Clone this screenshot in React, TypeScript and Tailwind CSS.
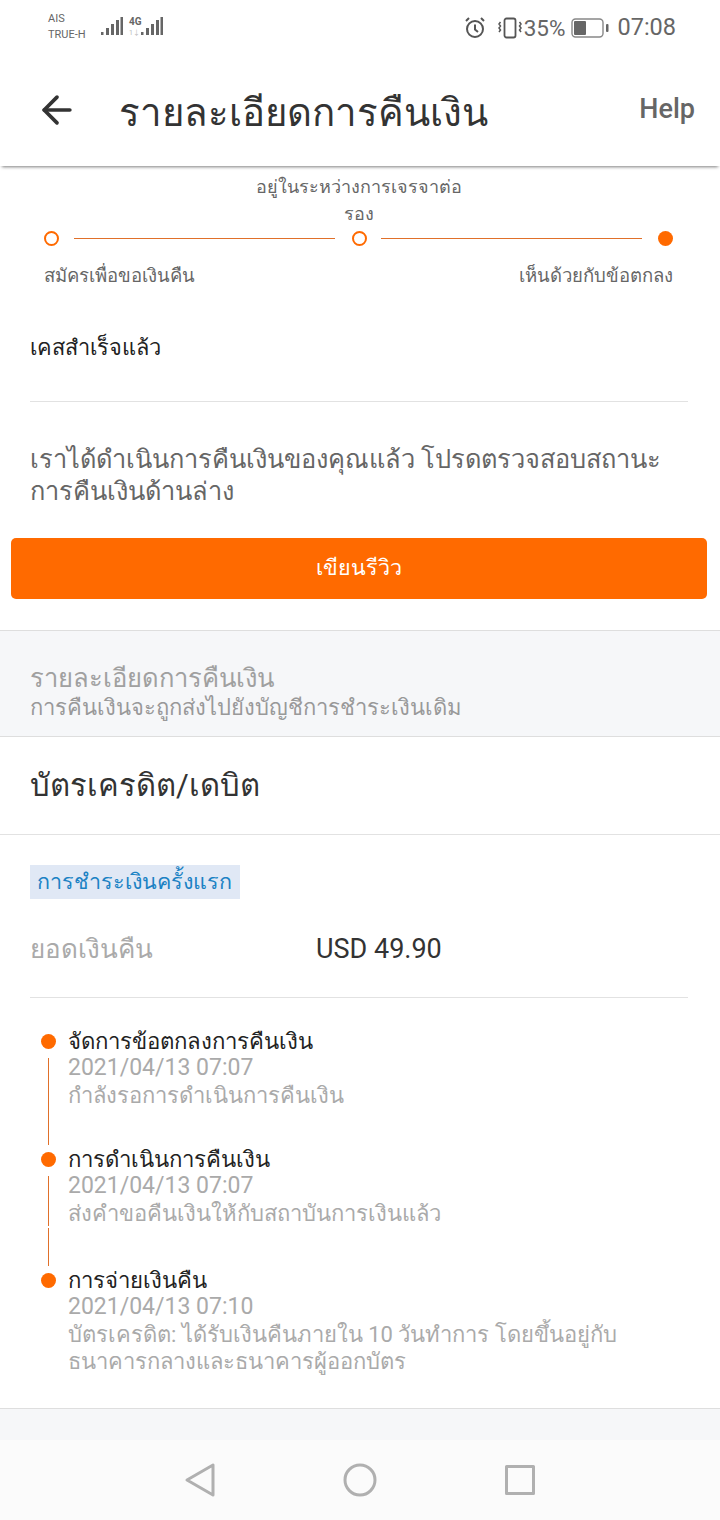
import { ArrowLeft } from 'lucide-react'

const FONT = "font-['Roboto','Noto_Sans','Noto_Sans_CJK_SC',sans-serif]"

function SignalBars() {
  return (
    <g fill="#666">
      <rect x="0" y="15" width="2.5" height="3" />
      <rect x="5" y="11" width="3" height="7" />
      <rect x="10" y="7" width="3" height="11" />
      <rect x="15" y="3" width="3" height="15" />
      <rect x="19.5" y="0" width="2.5" height="18" />
    </g>
  )
}

function StatusBar() {
  return (
    <div className="flex h-[56px] items-center justify-between pl-[48px] pr-[44px] text-[#666]">
      <div className="flex items-center">
        <div className="-mt-[2px] w-[53px] text-[11px] leading-[16px]">
          <div>AIS</div>
          <div>TRUE-H</div>
        </div>
        <svg width="64" height="24" viewBox="0 0 64 24" className="mt-[2px]">
          <SignalBars />
          <text x="28" y="8" fontSize="10" fontWeight="700" fill="#666">4G</text>
          <text x="28" y="18" fontSize="7" fill="#bbb">1↓</text>
          <g transform="translate(40 0)">
            <SignalBars />
          </g>
        </svg>
      </div>
      <div className="flex items-center text-[22.5px] leading-none">
        <svg width="24" height="24" viewBox="0 0 24 24" fill="none" stroke="#555" strokeWidth="2" className="mr-[11px]">
          <circle cx="12" cy="13" r="8" />
          <path d="M12 8.5V13.5L15 16M3 5l3-3M21 5l-3-3" />
        </svg>
        <svg width="24" height="24" viewBox="0 0 24 24" fill="none" stroke="#555" className="mr-[2px]">
          <rect x="6.5" y="2.5" width="11" height="19" rx="2" strokeWidth="1.8" />
          <path d="M2.5 6l-1.5 2 1.5 2-1.5 2 1.5 2-1.5 2M21.5 6l1.5 2-1.5 2 1.5 2-1.5 2 1.5 2" strokeWidth="1.5" />
        </svg>
        <span>35%</span>
        <svg width="38" height="20" viewBox="0 0 38 20" fill="none" className="ml-[6px] mr-[8px]">
          <rect x="1" y="1" width="31" height="18" rx="3.5" stroke="#888" strokeWidth="1.4" />
          <rect x="3" y="3" width="12" height="14" rx="1" fill="#666" />
          <rect x="35" y="6" width="2.5" height="8" rx="1" fill="#666" />
        </svg>
        <span className="text-[23.5px]">07:08</span>
      </div>
    </div>
  )
}

function Header() {
  return (
    <header className="relative z-10 flex h-[110px] items-center bg-white pl-[35px] pr-[25px] shadow-[0_3px_3px_-2px_rgba(0,0,0,0.5)]">
      <ArrowLeft size={44} strokeWidth={2} className="-mt-[2px] text-[#333]" />
      <h1 className="ml-[40px] mt-[4px] flex-1 text-[38.4px] leading-none text-[#333]">รายละเอียดการคืนเงิน</h1>
      <span className="-mt-[4px] text-[27px] font-medium text-[#666]">Help</span>
    </header>
  )
}

function Stepper() {
  return (
    <section className="pt-[7px]">
      <p className="mx-auto w-[230px] -translate-x-[1px] text-center text-[18px] leading-[27px] text-[#666]">
        อยู่ในระหว่างการเจรจาต่อรอง
      </p>
      <div className="flex h-[22px] items-center pl-[44px] pr-[47px]">
        <span className="h-[15px] w-[15px] rounded-full border-2 border-[#ff6a00]" />
        <span className="ml-[15px] mr-[17px] h-[1px] flex-1 bg-[#e0702a]" />
        <span className="h-[15px] w-[15px] rounded-full border-2 border-[#ff6a00]" />
        <span className="ml-[14px] mr-[16px] h-[1px] flex-1 bg-[#e0702a]" />
        <span className="h-[15px] w-[15px] rounded-full bg-[#ff6a00]" />
      </div>
      <div className="mt-[14px] flex justify-between pl-[44px] pr-[47px] text-[18.5px] leading-[27px] text-[#666]">
        <span>สมัครเพื่อขอเงินคืน</span>
        <span>เห็นด้วยกับข้อตกลง</span>
      </div>
    </section>
  )
}

const EVENTS = [
  {
    title: 'จัดการข้อตกลงการคืนเงิน',
    time: '2021/04/13 07:07',
    note: ['กำลังรอการดำเนินการคืนเงิน'],
  },
  {
    title: 'การดำเนินการคืนเงิน',
    time: '2021/04/13 07:07',
    note: ['ส่งคำขอคืนเงินให้กับสถาบันการเงินแล้ว'],
  },
  {
    title: 'การจ่ายเงินคืน',
    time: '2021/04/13 07:10',
    note: ['บัตรเครดิต: ได้รับเงินคืนภายใน 10 วันทำการ โดยขึ้นอยู่กับ', 'ธนาคารกลางและธนาคารผู้ออกบัตร'],
  },
]

function Timeline() {
  return (
    <section className="pl-[41px] pr-[30px] pt-[29px] pb-[33px]">
      {EVENTS.map((e, i) => (
        <div key={e.title} className={`flex ${i === 0 ? 'h-[118px]' : i === 1 ? 'h-[121px]' : ''}`}>
          <div className="flex w-[27px] flex-col items-start">
            <span className="mt-[7px] h-[15px] w-[15px] shrink-0 rounded-full bg-[#ff6a00]" />
            {i === 0 && <span className="ml-[7px] mt-[9px] w-[1px] flex-1 bg-[#e0702a]" />}
            {i === 1 && (
              <>
                <span className="ml-[7px] mt-[9px] h-[50px] w-[1px] bg-[#e0702a]" />
                <span className="ml-[7px] mt-[2px] w-[1px] flex-1 bg-[#e0702a]" />
              </>
            )}
          </div>
          <div>
            <div className="text-[22.2px] leading-[29px] text-[#222]">{e.title}</div>
            <div className="-mt-[2px] text-[23px] leading-[27px] text-[#aaa]">{e.time}</div>
            <div className="mt-[1px] text-[22px] leading-[27px] text-[#aaa]">
              {e.note.map((n) => (
                <div key={n}>{n}</div>
              ))}
            </div>
          </div>
        </div>
      ))}
    </section>
  )
}

function NavBar() {
  return (
    <nav className="flex h-[80px] items-center justify-center gap-[120px] bg-[#fbfbfb]">
      <svg width="40" height="40" viewBox="0 0 40 40" fill="none" stroke="#b0b0b0" strokeWidth="3" strokeLinejoin="round">
        <path d="M33 5v30L7 20z" />
      </svg>
      <svg width="40" height="40" viewBox="0 0 40 40" fill="none" stroke="#b0b0b0" strokeWidth="3">
        <circle cx="20" cy="20" r="15" />
      </svg>
      <svg width="40" height="40" viewBox="0 0 40 40" fill="none" stroke="#b0b0b0" strokeWidth="3" strokeLinejoin="round">
        <rect x="6.5" y="6.5" width="27" height="27" />
      </svg>
    </nav>
  )
}

export default function App() {
  return (
    <div className={`flex h-[1520px] w-[720px] flex-col overflow-hidden bg-white ${FONT}`}>
      <StatusBar />
      <Header />
      <Stepper />

      <div className="ml-[30px] mr-[32px] mt-[44px] border-b border-[#e2e2e2] pb-[39px] text-[21.8px] leading-[28px] text-[#222]">
        เคสสำเร็จแล้ว
      </div>

      <p className="pl-[30px] pr-[32px] pt-[41px] text-[25.4px] leading-[32px] text-[#666]">
        เราได้ดำเนินการคืนเงินของคุณแล้ว โปรดตรวจสอบสถานะการคืนเงินด้านล่าง
      </p>

      <button className="ml-[11px] mr-[13px] mt-[31px] h-[61px] shrink-0 rounded-[5px] bg-[#ff6a00] text-[21.5px] text-white">
        เขียนรีวิว
      </button>

      <div className="mt-[31px] h-[107px] shrink-0 border-y border-[#dedede] bg-[#f6f7f9] px-[30px] pt-[31px]">
        <div className="text-[25.6px] leading-[32px] text-[#a0a0a0]">รายละเอียดการคืนเงิน</div>
        <div className="text-[22px] leading-[28px] text-[#999]">การคืนเงินจะถูกส่งไปยังบัญชีการชำระเงินเดิม</div>
      </div>

      <div className="flex h-[98px] shrink-0 items-center border-b border-[#e2e2e2] px-[30px] pt-[2px] text-[31px] text-[#333]">
        บัตรเครดิต/เดบิต
      </div>

      <div className="px-[30px] pt-[30px]">
        <span className="block h-[34px] w-[210px] bg-[#e0e8f5] px-[7px] text-[21.5px] leading-[34px] text-[#1b82c4]">
          การชำระเงินครั้งแรก
        </span>
      </div>

      <div className="ml-[30px] mr-[32px] flex h-[99px] shrink-0 items-center border-b border-[#e2e2e2] pt-[2px] text-[26px]">
        <span className="w-[286px] text-[#aaa]">ยอดเงินคืน</span>
        <span className="text-[27px] text-[#333]">USD 49.90</span>
      </div>

      <Timeline />

      <div className="flex-1 border-t border-[#dedede] bg-[#f6f7f9]" />
      <NavBar />
    </div>
  )
}
